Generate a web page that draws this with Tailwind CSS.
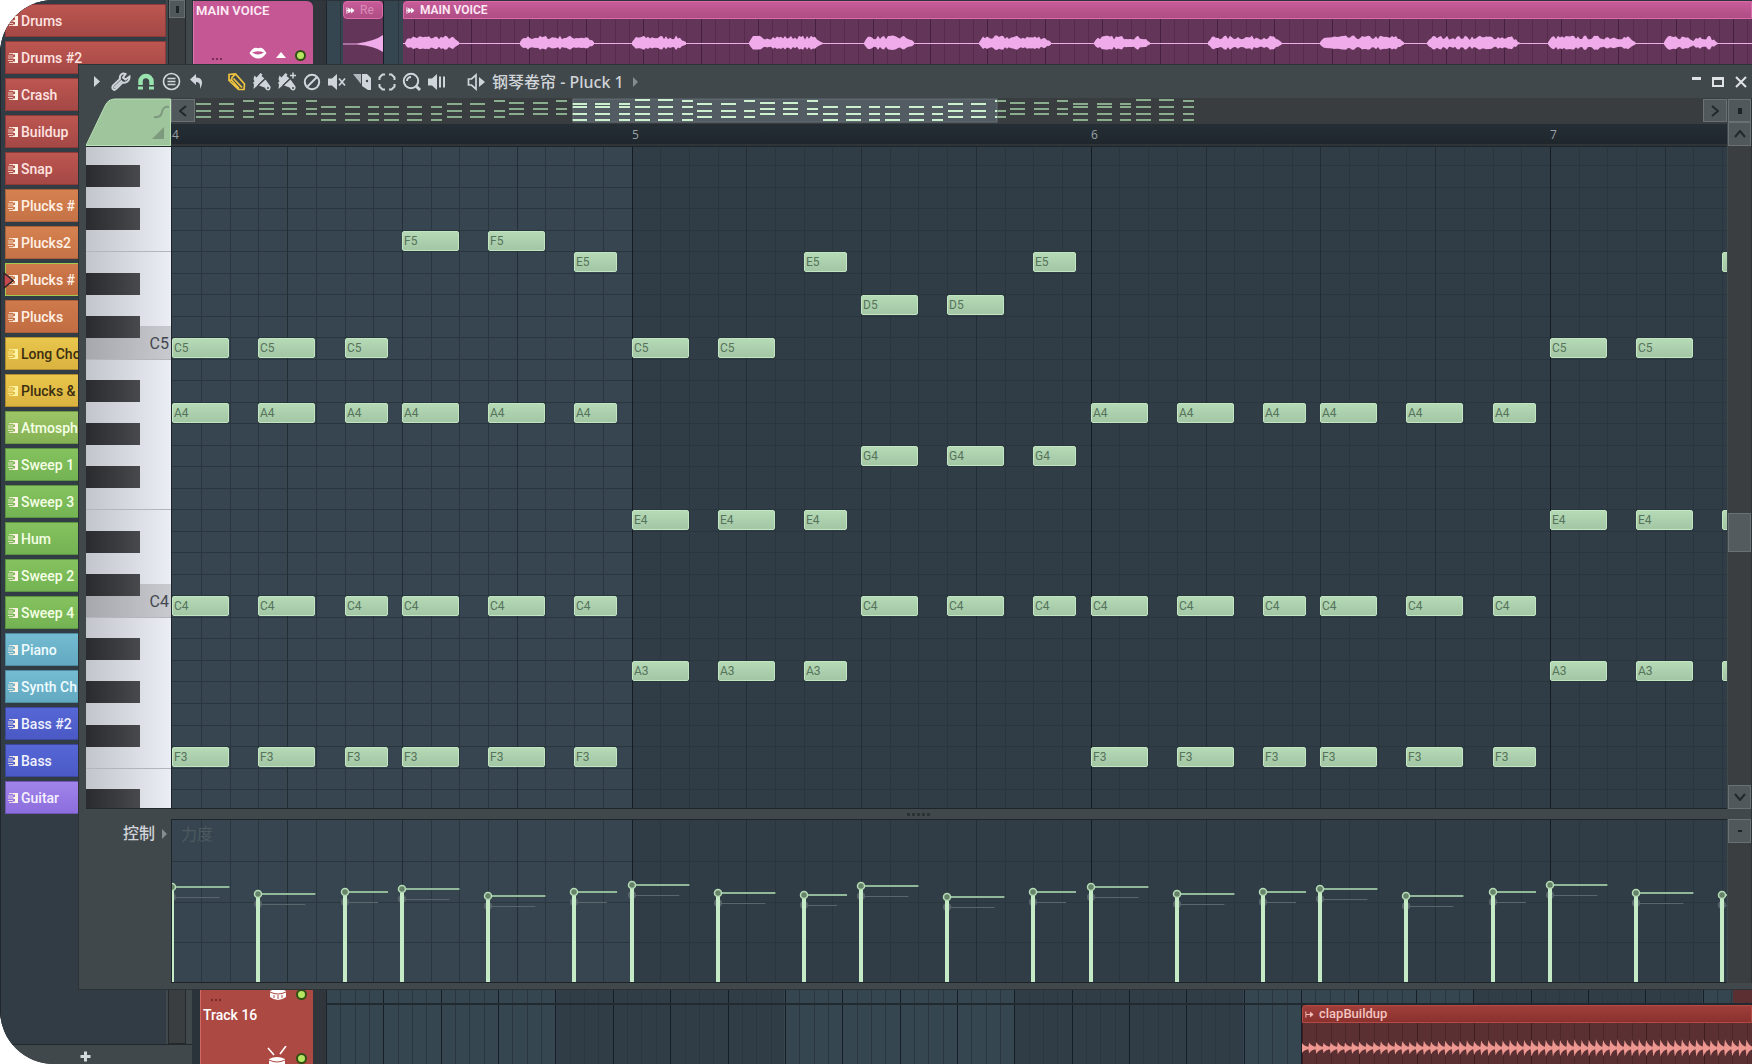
<!DOCTYPE html>
<html lang="zh-CN">
<head>
<meta charset="utf-8">
<title>钢琴卷帘 - Pluck 1</title>
<script src="https://cdn.jsdelivr.net/npm/@tailwindcss/browser@4"></script>
</head>
<body class="bg-white font-['Roboto','Noto_Sans_CJK_SC',sans-serif]">
<div class="relative flex min-h-screen overflow-hidden rounded-l-[54px] bg-[#2b333a]">

  <!-- Browser / pattern picker -->
  <aside class="flex w-[192px] shrink-0 flex-col bg-[#41484b]">
    <div class="flex flex-1 border-l border-[#20262b]">
      <div id="patterns" class="flex flex-1 flex-col gap-1 bg-[#323c44] pt-1 pl-1"></div>
      <div class="ml-[2px] w-[18px] border-x border-b border-[#24292c] bg-[#3a3e40]">
        <button aria-label="Scroll up" class="flex h-[18px] w-full items-center justify-center border border-[#697174] bg-[#50585b]"><span class="h-[7px] w-[3px] bg-[#1d2327]"></span></button>
      </div>
      <div class="w-[6px]"></div>
    </div>
    <div class="flex h-[20px] items-center justify-center border-t border-[#22282b] pr-[22px] pt-1">
      <button aria-label="Add" class="flex items-center justify-center"><svg width="11" height="11" viewBox="0 0 11 11"><path d="M5.500 0.500v10M0.500 5.500h10" stroke="#d5dadd" stroke-width="3"/></svg></button>
    </div>
  </aside>

  <!-- Playlist -->
  <main class="flex min-w-0 flex-1 flex-col justify-between">
    <div class="flex h-[70px] pt-px">
      <div class="ml-px flex w-[120px] flex-col justify-between rounded-tr-md border-l border-[#dd77ad] bg-[#c55894] px-[2px]">
        <span class="text-[13px] leading-5 font-semibold text-[#fdeaf4]">MAIN VOICE</span>
        <div class="mb-[7px] flex items-center gap-[9px] pr-[5px] pl-4">
          <span class="mt-2 mr-auto flex gap-[2px]"><i class="size-[2px] bg-[#7a2e58]"></i><i class="size-[2px] bg-[#7a2e58]"></i><i class="size-[2px] bg-[#7a2e58]"></i></span>
          <svg class="mb-1" width="18" height="12" viewBox="0 0 18 12"><path d="M0.500 6Q4 0.500 7 0.800Q9 1.500 11 0.800Q14 0.500 17.500 6Q14 11.500 9 11.500Q4 11.500 0.500 6Z" fill="#fff"/><path d="M3 5.500Q9 3 15 5.500Q9 9.500 3 5.500Z" fill="#c55894"/></svg>
          <svg width="10" height="6"><path d="M0 6L5 0L10 6Z" fill="#fff"/></svg>
          <span class="size-[11px] rounded-full border-2 border-[#315014] bg-[#b5e561]"></span>
        </div>
      </div>
      <div class="w-[13px] bg-[#30363b]"></div>
      <div class="relative flex-1 overflow-hidden bg-[#364650]">
        <svg class="plines absolute inset-0 h-full w-full"></svg>
        <div class="absolute inset-0 flex gap-[20px] pl-[17px]">
          <div class="flex w-[40px] flex-col bg-[#633558]">
            <div class="flex h-[18px] items-center gap-[5px] rounded-sm border border-[#dc6ba9] bg-linear-to-b from-[#c75c99] to-[#ae4d84] pl-[2px] text-[12px] leading-4 text-[#d98dbb]"><svg width="9" height="9" viewBox="0 0 10 9"><path d="M1 1v7M1 4.500h4M3 2l2.500 2.500L3 7zM6 2l3 2.500L6 7z" fill="#fff" stroke="#fff"/></svg>Re</div>
            <svg class="flex-1" viewBox="0 0 40 51"><path d="M0 24.500H14Q32 22 40 16V33Q32 27 14 25.500H0Z" fill="#efabea"/></svg>
          </div>
          <div class="relative flex flex-1 flex-col bg-[#633558]">
            <div class="flex h-[18px] items-center gap-[5px] rounded-tl-sm border border-[#dc6ba9] bg-linear-to-b from-[#c75c99] to-[#ae4d84] pl-[2px] text-[12px] leading-4 font-semibold text-[#fdeaf4]"><svg width="9" height="9" viewBox="0 0 10 9"><path d="M1 1v7M1 4.500h4M3 2l2.500 2.500L3 7zM6 2l3 2.500L6 7z" fill="#fff" stroke="#fff"/></svg>MAIN VOICE</div>
            <svg id="voice" class="w-full flex-1"></svg>
          </div>
        </div>
      </div>
    </div>

    <div class="flex h-[80px]">
      <div class="ml-[8px] flex w-[113px] flex-col border-l border-[#d26862] bg-[#ad4943] pr-[6px] pl-[2px]">
        <div class="flex items-center gap-[9px] pt-[3px] pl-2">
          <span class="mt-3 mr-auto flex gap-[2px]"><i class="size-[2px] bg-[#6e2b28]"></i><i class="size-[2px] bg-[#6e2b28]"></i><i class="size-[2px] bg-[#6e2b28]"></i></span>
          <svg width="18" height="14" viewBox="0 0 18 14"><path d="M1 4q8-5 16 0v6q-8 6-16 0z" fill="#fff"/><path d="M1 5q8 4 16 0M5 8v3M9 8v4M13 8v3" stroke="#ad4943" fill="none"/></svg>
          <span class="size-[11px] rounded-full border-2 border-[#315014] bg-[#b5e561]"></span>
        </div>
        <span class="mt-1 text-[14px] leading-5 font-medium text-white">Track 16</span>
        <div class="mt-auto flex items-end justify-end gap-[9px]">
          <svg width="20" height="18" viewBox="0 0 20 18"><path d="M1 2l6 7M19 0l-6 8" stroke="#fff" stroke-width="1.600"/><path d="M2 18v-5q8-4 16 0v5z" fill="#fff"/><path d="M2 14q8 4 16 0" stroke="#ad4943" fill="none"/></svg>
          <span class="size-[11px] rounded-full border-2 border-[#315014] bg-[#b5e561]"></span>
        </div>
      </div>
      <div class="w-[13px] bg-[#30363b]"></div>
      <div class="relative flex-1 overflow-hidden bg-[#364650]">
        <svg class="plines absolute inset-0 h-full w-full"></svg>
        <div class="absolute inset-x-0 top-[19px] h-[2px] bg-[#222a31]"></div>
        <div class="absolute top-0 right-0 h-[19px] w-[19px] bg-[#5c3033]"></div>
        <div class="absolute top-[21px] right-0 bottom-0 left-[976px] flex flex-col bg-[#5b3033]">
          <div class="flex h-[18px] items-center gap-[5px] rounded-tl-sm border border-[#b54a45] bg-linear-to-b from-[#9f3e3a] to-[#8a322f] pl-[2px] text-[13px] leading-4 font-medium text-[#f3c4c0]"><svg width="9" height="9" viewBox="0 0 10 9"><path d="M1 1v7M1 4.500h8M6 2l3 2.500L6 7z" fill="#f3c4c0" stroke="#f3c4c0"/></svg>clapBuildup</div>
          <svg id="clap" class="w-full flex-1"></svg>
        </div>
      </div>
    </div>
  </main>

  <!-- Piano roll window -->
  <section class="absolute top-[64px] right-0 bottom-[74px] left-[78px] flex flex-col border border-r-0 border-[#2c3235] bg-[#41484b] pb-[6px] pl-[7px]">
    <header class="flex h-[33px] shrink-0 items-center pr-[5px]">
      <div class="flex items-center gap-px text-[#d0d5dc]">
        <button aria-label="Menu" class="flex w-[22px] justify-center"><svg width="6" height="11"><path d="M0 0L6 5.500L0 11Z" fill="currentColor"/></svg></button>
        <button aria-label="Tools" class="flex w-[24px] justify-center"><svg width="20" height="20" viewBox="0 0 20 20"><path d="M18.500 4.500L14.500 7.500L12 5.500L14.500 2C11.500 0.500 8 3 9 7L2 13.500Q0.500 16.500 2.500 17.500Q4 18.500 5.500 16.500L11.500 10.500C15 11.500 19 9 18.500 4.500Z" fill="none" stroke="currentColor" stroke-width="2"/><path d="M3 16L11 8.500" stroke="currentColor" stroke-width="2"/></svg></button>
        <button aria-label="Snap" class="flex w-[24px] justify-center"><svg width="18" height="18" viewBox="0 0 18 18"><path d="M3.500 12V8.500a5.500 5.500 0 0 1 11 0V12" fill="none" stroke="#98e3ae" stroke-width="4.500"/><path d="M1 15h5M12 15h5" stroke="#98e3ae" stroke-width="3"/></svg></button>
        <button aria-label="Stamp" class="flex w-[25px] justify-center"><svg width="19" height="19" viewBox="0 0 19 19"><circle cx="9.500" cy="9.500" r="8" fill="none" stroke="currentColor" stroke-width="1.700"/><path d="M5.500 6.500h8M5.500 9.500h8M5.500 12.500h8" stroke="currentColor" stroke-width="1.500"/></svg></button>
        <button aria-label="Undo" class="mr-[15px] flex w-[24px] justify-center"><svg width="14" height="16" viewBox="0 0 14 16"><path d="M0 5.500L6 0V3.500C12 3.500 14 8 10 15C10.500 10 9.500 8 6 8V11Z" fill="currentColor"/></svg></button>
        <button aria-label="Draw" class="flex w-[24px] justify-center"><svg width="20" height="20" viewBox="0 0 20 20"><path d="M2 8.500V2.500L8.500 2L17.500 12L17 17.500H11.500Z M2 8.500L4.500 8L5 5.500L8.500 2M4.500 8L12 16.500M6.500 6.500L15 15.500" fill="none" stroke="#eec33f" stroke-width="1.700"/></svg></button>
        <button aria-label="Paint" class="flex w-[24px] justify-center"><svg width="20" height="20" viewBox="0 0 20 20"><path d="M2.500 3.500L4.500 5.500L8.500 1L10.500 2.500L9.500 4L12.500 6.500L5.500 13.500L1.500 17L2 12.500L1 10.500L2.500 9.500L1.500 7Z M7 13.500L13.500 7.500L18.500 14.500Q19 17.500 16.500 18.500Q14 18.500 12.500 15.500Z" fill="currentColor"/><path d="M5.500 13.500L13 6.500" stroke="#41484b"/><circle cx="16" cy="16" r="1" fill="#41484b"/></svg></button>
        <button aria-label="Paint drum" class="flex w-[24px] justify-center"><svg width="20" height="20" viewBox="0 0 20 20"><path d="M2.500 3.500L4.500 5.500L8.500 1L10.500 2.500L9.500 4L12.500 6.500L5.500 13.500L1.500 17L2 12.500L1 10.500L2.500 9.500L1.500 7Z M7 13.500L13.500 7.500L18.500 14.500Q19 17.500 16.500 18.500Q14 18.500 12.500 15.500Z" fill="currentColor"/><path d="M5.500 13.500L13 6.500" stroke="#41484b"/><circle cx="16" cy="16" r="1" fill="#41484b"/><path d="M13 3.500h6M16 0.500v6" stroke="currentColor" stroke-width="1.500"/></svg></button>
        <button aria-label="Delete" class="flex w-[24px] justify-center"><svg width="18" height="18" viewBox="0 0 18 18"><circle cx="9" cy="9" r="7.200" fill="none" stroke="currentColor" stroke-width="2"/><path d="M4 14L14 4" stroke="currentColor" stroke-width="2"/></svg></button>
        <button aria-label="Mute" class="flex w-[24px] justify-center"><svg width="20" height="18" viewBox="0 0 20 18"><path d="M1 5.500h4L10 1v16l-5-4.500H1z" fill="currentColor"/><path d="M12 5.500l6 7M18 5.500l-6 7" stroke="currentColor" stroke-width="1.700"/></svg></button>
        <button aria-label="Slice" class="flex w-[24px] justify-center"><svg width="18" height="17" viewBox="0 0 18 17"><path d="M0 1H8V11Z" fill="currentColor" opacity=".8"/><path d="M9 1H14L18 5V17H15L9 13Z" fill="currentColor"/><circle cx="14" cy="8" r="1.200" fill="#41484b"/></svg></button>
        <button aria-label="Select" class="flex w-[24px] justify-center"><svg width="18" height="18" viewBox="0 0 18 18"><path d="M1.500 7V4.500l3-3H7M11 1.500h2.500l3 3V7M16.500 11v2.500l-3 3H11M7 16.500H4.500l-3-3V11" fill="none" stroke="currentColor" stroke-width="2"/></svg></button>
        <button aria-label="Zoom" class="flex w-[24px] justify-center"><svg width="20" height="20" viewBox="0 0 20 20"><circle cx="9" cy="9" r="7.200" fill="none" stroke="currentColor" stroke-width="2"/><path d="M5 9a4 4 0 0 1 4-4" fill="none" stroke="currentColor" stroke-width="2"/><path d="M13.500 13.500L18 18" stroke="currentColor" stroke-width="3"/></svg></button>
        <button aria-label="Playback" class="mr-[14px] flex w-[24px] justify-center"><svg width="20" height="18" viewBox="0 0 20 18"><path d="M1 5.500h4L10 1v16l-5-4.500H1z" fill="currentColor"/><path d="M13 3.500v11M17 3.500v11" stroke="currentColor" stroke-width="2"/></svg></button>
        <button aria-label="Preview" class="flex w-[24px] justify-center"><svg width="19" height="18" viewBox="0 0 19 18"><path d="M1.500 6h3L9 2v14l-4.500-4h-3z" fill="none" stroke="currentColor" stroke-width="1.700"/><path d="M12 4l6 5l-6 5z" fill="currentColor"/></svg></button>
      </div>
      <h1 class="ml-1 flex items-center gap-[9px] text-[16px] leading-5 font-medium text-[#d0d4d8] font-['Noto_Sans','Noto_Sans_CJK_SC',sans-serif]">钢琴卷帘 - Pluck 1<svg width="5" height="10"><path d="M0 0L5 5L0 10Z" fill="#858b8e"/></svg></h1>
      <div class="ml-auto flex items-center gap-[11px] text-[#dfe3e6]">
        <button aria-label="Minimize" class="h-[10px] w-[9px] border-t-[3px]"></button>
        <button aria-label="Maximize" class="h-[10px] w-[12px] border-2 border-t-[3px]"></button>
        <button aria-label="Close"><svg width="12" height="12" viewBox="0 0 12 12"><path d="M1 1l10 10M11 1L1 11" stroke="currentColor" stroke-width="2"/></svg></button>
      </div>
    </header>

    <div class="flex min-h-0 flex-1">
      <!-- Corner, keyboard, control label -->
      <div class="flex w-[85px] shrink-0 flex-col">
        <svg class="h-[48px] w-full shrink-0" viewBox="0 0 85 48"><path d="M0 48L19 8Q22 1 29 1H85V48Z" fill="#9fc59c"/><path d="M0 47.500L19 8Q22 1 29 1H84.500V47.500Z" fill="none" stroke="#b9e2b6"/><path d="M68 19q7 1 8-5t7-5" fill="none" stroke="#7d9a7e" stroke-width="2"/><path d="M66 41L78 29V41Z" fill="#7d9a7e"/></svg>
        <div id="keys" class="relative flex-1 overflow-hidden border-y border-[#24292d] bg-linear-to-r from-[#c3c5cc] to-[#eceef5]"></div>
        <div class="flex h-[174px] items-start justify-end gap-[7px] pt-[11px] pr-[4px] text-[#d0d4d8]">
          <span class="text-[16px] leading-6 font-medium font-['Noto_Sans_CJK_SC',sans-serif]">控制</span>
          <svg class="mt-[9px]" width="5" height="10"><path d="M0 0L5 5L0 10Z" fill="#858b8e"/></svg>
        </div>
      </div>

      <!-- Timeline -->
      <div class="flex min-w-0 flex-1 flex-col">
        <div class="flex h-[26px] bg-[#393d40]">
          <button aria-label="Scroll left" class="mt-px flex h-[23px] w-[24px] items-center justify-center border border-[#697174] bg-[#50585b]"><svg width="8" height="12"><path d="M7 1L1 6l6 5" fill="none" stroke="#22292d" stroke-width="2"/></svg></button>
          <svg id="overview" class="h-full min-w-0 flex-1"></svg>
          <button aria-label="Scroll right" class="mt-px flex h-[23px] w-[24px] items-center justify-center border border-[#697174] bg-[#50585b]"><svg width="8" height="12"><path d="M1 1l6 5l-6 5" fill="none" stroke="#22292d" stroke-width="2"/></svg></button>
        </div>
        <div id="ruler" class="relative h-[22px] overflow-hidden border-b-2 border-[#2e3438] bg-linear-to-b from-[#252e35] to-[#1f272d] text-[12px] leading-[22px] text-[#9aa1a6] font-['Open_Sans',sans-serif]"></div>
        <div id="grid" class="relative flex-1 overflow-hidden border-y border-l border-[#1d252b] bg-[#303d46]"></div>
        <div class="flex h-[10px] items-center justify-center gap-[2px] pr-[62px]">
          <i class="size-[3px] bg-[#2c3234]"></i><i class="size-[3px] bg-[#2c3234]"></i><i class="size-[3px] bg-[#2c3234]"></i><i class="size-[3px] bg-[#2c3234]"></i><i class="size-[3px] bg-[#2c3234]"></i>
        </div>
        <div class="relative h-[164px] overflow-hidden border-y border-l border-[#1d252b] bg-[#303d46]">
          <svg id="velocity" class="absolute inset-0 h-full w-full"></svg>
          <span class="absolute top-[1px] left-[9px] text-[16px] leading-6 text-[#4c5a60] font-['Noto_Sans_CJK_SC',sans-serif]">力度</span>
        </div>
      </div>

      <!-- Vertical scroll bars -->
      <div class="flex w-[25px] shrink-0 flex-col border-r border-[#2c3235] pl-px">
        <button aria-label="Options" class="mt-px flex h-[23px] items-center justify-center border border-[#697174] bg-[#50585b]"><span class="h-[6px] w-1 bg-[#1d2327]"></span></button>
        <div class="flex flex-1 flex-col justify-between bg-[#3a3e40]">
          <button aria-label="Scroll up" class="flex h-[24px] items-center justify-center border border-[#697174] bg-[#50585b]"><svg width="12" height="8"><path d="M1 7l5-6l5 6" fill="none" stroke="#22292d" stroke-width="2"/></svg></button>
          <div class="flex flex-1 flex-col">
            <div class="grow-[368]"></div>
            <button aria-label="Scroll thumb" class="h-[39px] border border-[#697174] bg-[#545b5e]"></button>
            <div class="grow-[233]"></div>
          </div>
          <button aria-label="Scroll down" class="flex h-[24px] items-center justify-center border border-[#697174] bg-[#50585b]"><svg width="12" height="8"><path d="M1 1l5 6l5-6" fill="none" stroke="#22292d" stroke-width="2"/></svg></button>
        </div>
        <div class="mt-[10px] h-[164px] bg-[#3a3e40]">
          <button aria-label="Control options" class="flex h-[24px] w-full items-center justify-center border border-[#697174] bg-[#50585b]"><span class="h-[2px] w-1 bg-[#1d2327]"></span></button>
        </div>
      </div>
    </div>
  </section>
</div>

<script>
const $ = (id) => document.getElementById(id);

// Pattern list
const red = 'bg-linear-to-b from-[#bd5650] to-[#a44846] border-[#8d3b3a] text-[#ffe3e0]';
const orange = 'bg-linear-to-b from-[#d5814f] to-[#c57247] border-[#a85f3a] text-[#fff0e4]';
const rust = 'bg-linear-to-b from-[#cf7a4c] to-[#c16c42] border-[#a85f3a] text-[#fff0e4]';
const selected = 'bg-linear-to-b from-[#cf7a4c] to-[#bd693f] border-[#a3c94e] text-[#fff0e4]';
const gold = 'bg-linear-to-b from-[#e9c64c] to-[#dab340] border-[#b08c30] text-[#3b2f10]';
const lime = 'bg-linear-to-b from-[#9cc566] to-[#84b154] border-[#6d9747] text-[#f4ffe4]';
const green = 'bg-linear-to-b from-[#85c25f] to-[#74b353] border-[#5c9343] text-[#f4ffe4]';
const cyan = 'bg-linear-to-b from-[#74bcd2] to-[#62a9c1] border-[#4e8ba1] text-[#eefbff]';
const blue = 'bg-linear-to-b from-[#5667d6] to-[#4a59c4] border-[#3c489f] text-[#eef0ff]';
const violet = 'bg-linear-to-b from-[#a184ea] to-[#8c6ddd] border-[#6f56b2] text-[#f5f0ff]';
const patterns = [['Drums', red], ['Drums #2', red], ['Crash', red], ['Buildup', red], ['Snap', red],
  ['Plucks #', orange], ['Plucks2', orange], ['Plucks #', selected], ['Plucks', rust], ['Long Cho', gold], ['Plucks &amp;', gold],
  ['Atmosph', lime], ['Sweep 1', green], ['Sweep 3', green], ['Hum', green], ['Sweep 2', green], ['Sweep 4', green],
  ['Piano', cyan], ['Synth Ch', cyan], ['Bass #2', blue], ['Bass', blue], ['Guitar', violet]];
$('patterns').innerHTML = patterns.map(([name, tone]) => `
  <button class="relative flex h-[33px] items-center gap-[2px] overflow-visible border pl-[2px] text-[14px] leading-5 font-medium whitespace-nowrap ${tone}">
    ${tone === selected ? '<svg class="absolute -left-[3px] top-[8px]" width="11" height="17"><path d="M1 1L10 8.500L1 16Z" fill="#c44a50" stroke="#30262a" stroke-width="1.500"/></svg>' : ''}
    <svg width="11" height="12" viewBox="0 0 11 12"><path d="M1 1.500h6M0 4h5M0 6h7M0 8.500h5M1 10.500h6" fill="none" stroke="${tone === gold ? '#fff3a0' : '#fff3e6'}" stroke-opacity=".75"/><path d="M5 1h5v10H5V9.500h2V7H5.500V5H7V2.500H5z" fill="${tone === gold ? '#fff3a0' : '#fff3e6'}"/></svg>
    <span>${name}</span>
  </button>`).join('');

// Playlist bar lines
document.querySelectorAll('.plines').forEach((svg) => {
  let s = '<rect x="0" width="1" height="100%" fill="#1d252b"/>';
  for (let g = 1; g < 12; g += 2) s += `<rect x="${Math.round(g * 229.4)}" width="229" height="100%" fill="#303d46"/>`;
  for (let i = 1; i < 200; i++) s += `<rect x="${Math.round(i * 14.34)}" width="1" height="100%" fill="${i % 4 ? '#2b363e' : '#161e25'}"/>`;
  svg.innerHTML = s;
});

// Audio clips
let seed = 7;
const rnd = () => (seed = (seed * 16807) % 2147483647) / 2147483647;
const bursts = [[405, 460], [520, 595], [632, 687], [749, 823], [864, 915], [979, 1052], [1094, 1151], [1208, 1282],
  [1320, 1405], [1427, 1476], [1468, 1520], [1548, 1636], [1664, 1696], [1692, 1718]];
let v = '';
for (let i = 0; i < 140; i++) { const x = Math.round(38.7 + 14.34 * (i - 4) + 0.5); v += `<rect x="${x - 14}" width="1" height="100%" fill="${(i + 1) % 4 ? '#552c4c' : '#44213f'}"/>`; }
v += '<rect y="24" width="100%" height="1" fill="#efabea"/>';
bursts.forEach(([a, b]) => {
  let top = '', bottom = '';
  for (let x = a; x <= b; x += 2) {
    const edge = Math.min(1, (x - a + 1) / 5, (b - x + 1) / 9), h = (4 + 4 * rnd()) * edge;
    top += ` ${x - 403},${24.5 - h}`; bottom = ` ${x - 403},${24.5 + h * 0.8}` + bottom;
  }
  v += `<polygon points="${top}${bottom}" fill="#efabea"/>`;
});
$('voice').innerHTML = v;
let c = '';
for (let i = 0; i < 140; i++) c += `<rect x="${Math.round(i * 14.34)}" width="1" height="100%" fill="${i % 4 ? '#4c272a' : '#3f1d20'}"/>`;
for (let i = 0; i < 260; i++) { const x = i * 7.17, h = 5 + Math.min(3, i / 12) + (i % 3) * 0.4; c += `<path d="M${x} ${25 - h}Q${x + 2} 23.500 ${x + 8} 24V26Q${x + 2} 26.500 ${x} ${25 + h}L${x - 1} 25Z" fill="#ee9690"/>`; }
$('clap').innerHTML = c;

// Notes: step offsets inside a bar with their lengths, then the pitches played there
const steps = [[0, 2], [3, 2], [6, 1.5], [8, 2], [11, 2], [14, 1.5]];
const names = ['C', 'C#', 'D', 'D#', 'E', 'F', 'F#', 'G', 'G#', 'A', 'A#', 'B'];
const pitch = (n) => names.indexOf(n[0]) + 12 * Number(n[1]);
const A = ['C5 A4 C4 F3', 'C5 A4 C4 F3', 'C5 A4 C4 F3', 'F5 A4 C4 F3', 'F5 A4 C4 F3', 'E5 A4 C4 F3'];
const B = ['C5 E4 A3', 'C5 E4 A3', 'E5 E4 A3', 'D5 G4 C4', 'D5 G4 C4', 'E5 G4 C4'];
const C = Array(6).fill('A4 C4 F3');
const song = [B, C, B, A, B, C, B, A];
const STEP = 28.7, ROW = 21.52, TOP = 18;   // TOP: upper edge of the G#5 row
const rowY = (k) => Math.round(TOP + ROW * k);
const G5 = pitch('G5') + 1;
const stepX = (n) => Math.round(n * STEP + 0.3);

// Grid and ruler, redrawn when the timeline changes width
function drawTimeline() {
  const visible = $('grid').clientWidth;
  let g = '<svg class="absolute inset-0 h-full w-full">';
  g += '<rect width="460" height="100%" fill="#36454f"/>';
  for (let k = 0; k < 60; k++) g += `<rect y="${rowY(k)}" width="100%" height="1" fill="#2a363e"/>`;
  for (let i = 1; i < 140; i++) g += `<rect x="${stepX(i)}" width="1" height="100%" fill="${i % 16 === 0 ? '#141c22' : i % 4 === 0 ? '#222d34' : '#2a363e'}"/>`;
  g += '</svg>';
  song.slice(3).forEach((bar, b) => bar.forEach((chord, s) => chord.split(' ').forEach((n) => {
    const x = stepX(b * 16 + steps[s][0]), w = Math.floor(steps[s][1] * STEP);
    if (x >= visible) return;
    g += `<div class="absolute h-[20px] overflow-hidden rounded-xs border border-[#c3e6c2] bg-linear-to-b from-[#b5dab5] to-[#a3c6a5] pl-[1px] text-[12px] leading-[19px] text-[#56735b] font-['Roboto',sans-serif]" style="left:${x}px;top:${rowY(G5 - pitch(n)) + 1}px;width:${w}px">${x + 18 < visible ? n : ''}</div>`;
  })));
  $('grid').innerHTML = g;
  $('ruler').innerHTML = [4, 5, 6, 7, 8].map((n, i) => stepX(i * 16) + 10 < visible ? `<span class="absolute" style="left:${stepX(i * 16) + 1}px">${n}</span>` : '').join('');
}
drawTimeline();
new ResizeObserver(drawTimeline).observe($('grid'));

// Keyboard
let k = '';
['C5', 'C4'].forEach((n) => {
  const y = rowY(G5 - pitch(n));
  k += `<div class="absolute right-0 left-0 h-[22px] bg-black/15" style="top:${y}px"></div><div class="absolute right-0 left-[54px] h-[11px] bg-black/15" style="top:${y - 11}px"></div>
  <span class="absolute right-[2px] text-[16px] leading-5 text-[#43484e] font-['Roboto',sans-serif]" style="top:${y - 3}px">${n}</span>`;
});
for (let i = 0; i < 40; i++) {
  const p = G5 - i, name = names[p % 12];
  if (name.includes('#')) k += `<div class="absolute left-0 h-[22px] w-[54px] bg-linear-to-r from-[#2a2b2e] to-[#48494c]" style="top:${rowY(i)}px"></div>`;
  if (name === 'E' || name === 'B') k += `<div class="absolute right-0 left-0 h-px bg-[#b4b6bc]" style="top:${rowY(i)}px"></div>`;
}
$('keys').innerHTML = k;

// Overview strip
const mini = (x0, inView) => song.map((bar, b) => bar.map((chord, s) => chord.split(' ').map((n) => {
  const x = (x0 + b * 125.3 + steps[s][0] * 7.83).toFixed(0), y = (21 - (pitch(n) - pitch('F3')) * 0.82).toFixed(0);
  return `<rect x="${x}" y="${y}" width="${Math.round(steps[s][1] * 7.4)}" height="2" fill="${inView ? '#cdf0cf' : '#8aae8d'}"/>`;
}).join('')).join('')).join('');
$('overview').innerHTML = `<defs><clipPath id="view"><rect x="378" y="0" width="424" height="24"/></clipPath></defs>
  ${mini(1, false)}<rect x="378" y="1" width="424" height="23" fill="#525c62" stroke="#69737a"/><g clip-path="url(#view)">${mini(1, true)}</g>`;

// Velocity lane
const levels = [[888, 895, 893, 890, 897, 893], [886, 894, 896, 887, 898, 893], [888, 895, 893, 890, 897, 893], [886, 894, 896, 887, 898, 893]];
let l = '<rect width="460" height="100%" fill="#36454f"/>';
[41, 82, 122].forEach((y) => l += `<rect y="${y}" width="100%" height="1" fill="#2a363e"/>`);
for (let i = 1; i < 140; i++) l += `<rect x="${stepX(i)}" width="1" height="100%" fill="${i % 16 === 0 ? '#141c22' : i % 4 === 0 ? '#222d34' : '#2a363e'}"/>`;
levels.forEach((bar, b) => bar.forEach((y, s) => {
  const x = stepX(b * 16 + steps[s][0]), w = steps[s][1] * STEP, cy = y - 821;
  l += `<rect x="${x}" y="${cy + 10}" width="${w - 10}" height="1" fill="#59666b"/><circle cx="${x}" cy="${cy + 10}" r="4" fill="#59666b"/>
  <rect x="${x}" y="${cy - 1}" width="${w}" height="2" fill="#91b899"/><rect x="${x - 2}" y="${cy}" width="4" height="${162 - cy}" fill="#c4ebc5"/>
  <circle cx="${x}" cy="${cy}" r="3.5" fill="#668268" stroke="#b5dcb6" stroke-width="1.500"/>`;
}));
$('velocity').innerHTML = l;
</script>
</body>
</html>
